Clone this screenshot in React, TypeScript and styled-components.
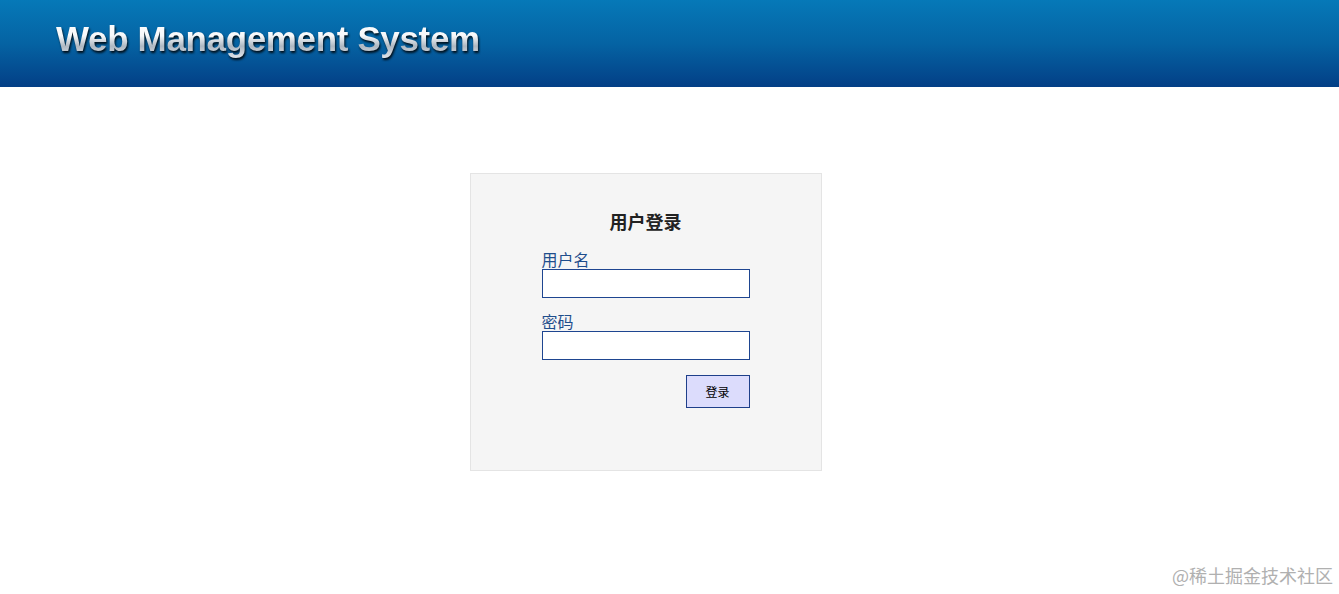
import styled, { createGlobalStyle } from 'styled-components';

const GlobalStyle = createGlobalStyle`
  html, body {
    margin: 0;
    padding: 0;
    background: #fff;
  }
  body {
    font-family: "Liberation Sans", Arial, "Noto Sans CJK SC", sans-serif;
  }
`;

const Page = styled.div`
  position: relative;
  display: flex;
  flex-direction: column;
  min-height: 594px;
`;

const Header = styled.header`
  height: 87px;
  display: flex;
  align-items: center;
  padding-left: 56px;
  background: linear-gradient(to bottom, #0679b8 0%, #0563a3 50%, #033f86 100%);
`;

const Title = styled.h1`
  margin: 0 0 10px;
  font-family: "Liberation Sans", Arial, sans-serif;
  font-weight: bold;
  font-size: 35px;
  letter-spacing: -0.35px;
  background: linear-gradient(to bottom, #ffffff 0%, #f6f8fa 42%, #aeb8c2 68%, #e4e8ee 100%);
  -webkit-background-clip: text;
  background-clip: text;
  color: transparent;
  filter: drop-shadow(1px 2px 1px rgba(0, 0, 0, 0.85));
`;

const Main = styled.main`
  display: flex;
  justify-content: center;
  padding-top: 86px;
  padding-right: 48px;
`;

const LoginBox = styled.form`
  box-sizing: border-box;
  width: 352px;
  height: 298px;
  background: #f5f5f5;
  border: 1px solid #e4e4e4;
  display: flex;
  flex-direction: column;
  align-items: center;
  padding-top: 35px;
`;

const BoxTitle = styled.h2`
  margin: 0 0 18px;
  font-family: "Noto Sans CJK SC", sans-serif;
  font-size: 18px;
  font-weight: bold;
  line-height: 24px;
  color: #222;
`;

const Fields = styled.div`
  width: 208px;
  display: flex;
  flex-direction: column;
`;

const Field = styled.label`
  display: flex;
  flex-direction: column;
  margin-bottom: 15px;
`;

const Label = styled.span`
  font-family: "Noto Sans CJK SC", sans-serif;
  font-size: 16px;
  line-height: 16px;
  padding-bottom: 2px;
  color: #1f4e8c;
`;

const Input = styled.input`
  box-sizing: border-box;
  width: 208px;
  height: 29px;
  margin: 0;
  border: 1px solid #1e4590;
  background: #fff;
  outline: none;
`;

const ButtonRow = styled.div`
  display: flex;
  justify-content: flex-end;
`;

const LoginButton = styled.button`
  box-sizing: border-box;
  width: 64px;
  height: 33px;
  background: #dcdcfc;
  border: 1px solid #1e3f8a;
  font-family: "Noto Sans CJK SC", sans-serif;
  font-size: 12px;
  color: #000;
  cursor: pointer;
`;

const Watermark = styled.div`
  position: absolute;
  right: 6px;
  bottom: 6px;
  font-family: "Noto Sans CJK SC", sans-serif;
  font-size: 18px;
  color: #b0b0b0;
`;

export default function App() {
  return (
    <Page>
      <GlobalStyle />
      <Header>
        <Title>Web Management System</Title>
      </Header>
      <Main>
        <LoginBox onSubmit={(e) => e.preventDefault()}>
          <BoxTitle>用户登录</BoxTitle>
          <Fields>
            <Field>
              <Label>用户名</Label>
              <Input type="text" />
            </Field>
            <Field>
              <Label>密码</Label>
              <Input type="password" />
            </Field>
            <ButtonRow>
              <LoginButton type="submit">登录</LoginButton>
            </ButtonRow>
          </Fields>
        </LoginBox>
      </Main>
      <Watermark>@稀土掘金技术社区</Watermark>
    </Page>
  );
}
